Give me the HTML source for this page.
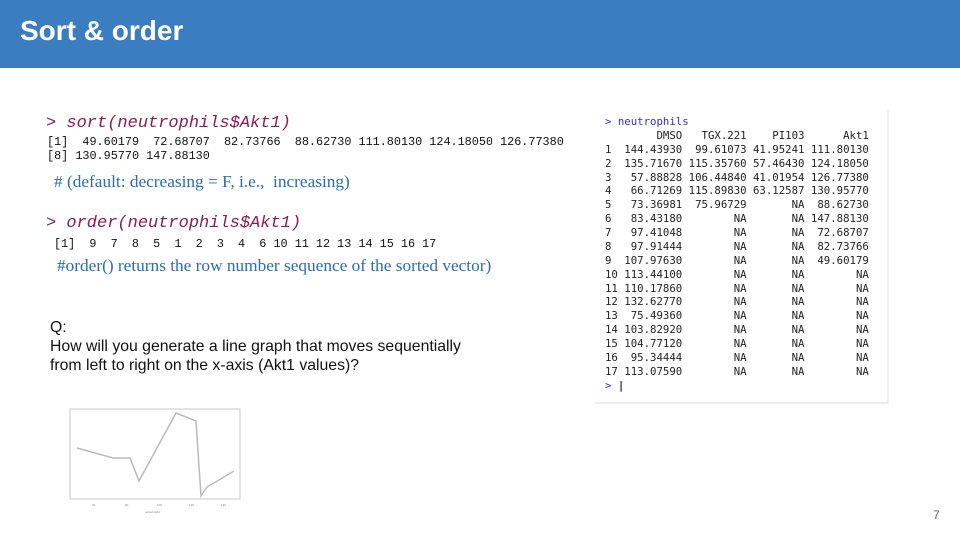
<!DOCTYPE html>
<html><head><style>
body{margin:0;width:960px;height:540px;background:#fff;position:relative;overflow:hidden;font-family:"Liberation Sans",sans-serif}
.hd{position:absolute;left:0;top:0;width:960px;height:68px;background:#3a7dc0}
.hd h1{position:absolute;left:20px;top:15px;margin:0;color:#fff;font-size:28px;font-weight:bold}
.t{position:absolute;white-space:pre;margin:0}
.cmd{font-family:"Liberation Mono",monospace;font-style:italic;color:#8b1a5a;font-size:17px}
.out{font-family:"Liberation Mono",monospace;font-size:11.8px;color:#111}
.cm{font-family:"Liberation Serif",serif;color:#2a6db5;font-size:17.3px}
.con{position:absolute;left:595px;top:110px;width:292px;height:292px;background:#fff;border-right:2px solid #eee;border-bottom:2px solid #eee}
.con pre{position:absolute;left:10px;top:5px;margin:0;font-family:"DejaVu Sans Mono",monospace;font-size:10.7px;line-height:13.87px;color:#222}
</style></head><body>
<div class="hd"><h1>Sort &amp; order</h1></div>
<div class="t cmd" style="left:46px;top:114px">&gt; sort(neutrophils$Akt1)</div>
<div class="t out" style="left:47px;top:135px">[1]  49.60179  72.68707  82.73766  88.62730 111.80130 124.18050 126.77380</div>
<div class="t out" style="left:47px;top:149px">[8] 130.95770 147.88130</div>
<div class="t cm" style="left:54px;top:172px"># (default: decreasing = F, i.e.,  increasing)</div>
<div class="t cmd" style="left:46px;top:214px">&gt; order(neutrophils$Akt1)</div>
<div class="t out" style="left:54px;top:237px">[1]  9  7  8  5  1  2  3  4  6 10 11 12 13 14 15 16 17</div>
<div class="t cm" style="left:57px;top:256px">#order() returns the row number sequence of the sorted vector)</div>
<div class="t" style="left:50px;top:318px;font-size:15.8px;line-height:19px;color:#111">Q:
How will you generate a line graph that moves sequentially
from left to right on the x-axis (Akt1 values)?</div>
<div class="con"><pre><span style="color:#3030d0">&gt; neutrophils</span>
        DMSO   TGX.221    PI103      Akt1
1  144.43930  99.61073 41.95241 111.80130
2  135.71670 115.35760 57.46430 124.18050
3   57.88828 106.44840 41.01954 126.77380
4   66.71269 115.89830 63.12587 130.95770
5   73.36981  75.96729       NA  88.62730
6   83.43180        NA       NA 147.88130
7   97.41048        NA       NA  72.68707
8   97.91444        NA       NA  82.73766
9  107.97630        NA       NA  49.60179
10 113.44100        NA       NA        NA
11 110.17860        NA       NA        NA
12 132.62770        NA       NA        NA
13  75.49360        NA       NA        NA
14 103.82920        NA       NA        NA
15 104.77120        NA       NA        NA
16  95.34444        NA       NA        NA
17 113.07590        NA       NA        NA
<span style="color:#3030d0">&gt; </span><b>|</b></pre></div>
<svg style="position:absolute;left:40px;top:400px" width="210" height="120">
<rect x="30" y="9" width="170" height="90" fill="none" stroke="#bbb" stroke-width="0.8"/>
<polyline points="37,48 73,58 90,58 99,81 136,13 156,21 161,96 167,87 194,71" fill="none" stroke="#bbb" stroke-width="1.5"/>
<g font-size="3" fill="#888"><text x="52" y="106">60</text><text x="85" y="106">80</text><text x="117" y="106">100</text><text x="149" y="106">120</text><text x="181" y="106">140</text><text x="105" y="113">sorted Akt1</text></g>
</svg>
<div class="t" style="left:933px;top:508px;font-size:12px;color:#666">7</div>
</body></html>
